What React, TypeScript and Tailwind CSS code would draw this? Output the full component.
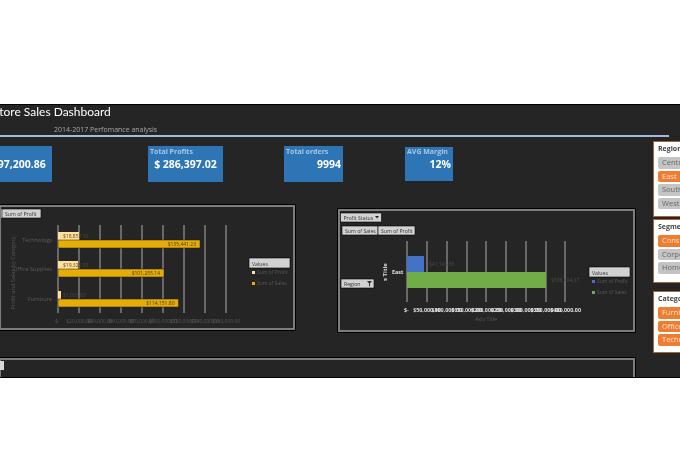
const FONT = 'font-["Open_Sans",sans-serif]';

interface BtnProps {
  x: number;
  y: number;
  w: number;
  h?: number;
  label: string;
}

// pivot chart field button; coordinates are page pixels (svg viewBox is offset)
function FieldBtn({ x, y, w, h = 9, label }: BtnProps) {
  return (
    <g>
      <rect x={x} y={y} width={w} height={h} fill="#d2d2d2" stroke="#000" strokeWidth="0.6" />
      <text x={x + 3} y={y + h - 2.5} fontSize="5.2" fill="#333">
        {label}
      </text>
    </g>
  );
}

function GridLines({ xs, y1, y2 }: { xs: number[]; y1: number; y2: number }) {
  return (
    <>
      {xs.map((x) => (
        <line key={x} x1={x} x2={x} y1={y1} y2={y2} stroke="#969696" strokeWidth="1.2" />
      ))}
    </>
  );
}

function ProfitChart() {
  const grid = [58, 79, 100, 121, 142, 163, 184, 205, 226];
  const rows = [
    { name: 'Technology', y: 232, profit: 21, sales: 142, pl: '$18,857.10', sl: '$135,441.23' },
    { name: 'Office Supplies', y: 261, profit: 20, sales: 106, pl: '$19,325.95', sl: '$101,255.14' },
    { name: 'Furniture', y: 291, profit: 3, sales: 120.5, pl: '$1,006.63', sl: '$114,151.80' },
  ];
  return (
    <div className="-ml-px h-[125px] w-[296px] shrink-0 border-2 border-[#7d7d7d] outline outline-black">
      <svg viewBox="1 207 292 121" className="block h-full w-full">
        <GridLines xs={grid} y1={225} y2={313} />
        <rect x="0" y="209" width="2" height="9" fill="#d2d2d2" />
        <FieldBtn x={2} y={209} w={39} label="Sum of Profit" />
        <text x="15" y="273" fontSize="5.6" fill="#555" textAnchor="middle" transform="rotate(-90 15 273)">
          Profit and Sales by Category
        </text>
        {rows.map((r) => (
          <g key={r.name}>
            <text x="52" y={r.y + 10} fontSize="5.6" fill="#5c5c5c" textAnchor="end">
              {r.name}
            </text>
            <rect x="58" y={r.y} width={r.profit} height="8" fill="#ffdf9e" />
            <rect x="58" y={r.y + 8} width={r.sales} height="8" fill="#e5ad06" stroke="#1a1a1a" strokeWidth="0.5" />
            <text x="63" y={r.y + 6} fontSize="5" fill={r.profit > 5 ? '#5a4a20' : '#4a4a4a'}>
              {r.pl}
            </text>
            <text x={58 + r.sales - 4} y={r.y + 14} fontSize="5" fill="#4d3a05" textAnchor="end">
              {r.sl}
            </text>
          </g>
        ))}
        <text x="55" y="323" fontSize="5" fill="#555">
          $-
        </text>
        {['$20,000.00', '$40,000.00', '$60,000.00', '$80,000.00', '$100,000.00', '$120,000.00', '$140,000.00', '$160,000.00'].map(
          (t, i) => (
            <text key={t} x={79 + i * 21} y="323" fontSize="5" fill="#585858" textAnchor="middle">
              {t}
            </text>
          ),
        )}
        <FieldBtn x={249} y={258} w={41} h={10} label="Values" />
        <rect x="252" y="271" width="3" height="3" fill="#ffdf9e" />
        <text x="257" y="274" fontSize="5" fill="#5a5a5a">
          Sum of Profit
        </text>
        <rect x="252" y="282" width="3" height="3" fill="#e5ad06" />
        <text x="257" y="285" fontSize="5" fill="#5a5a5a">
          Sum of Sales
        </text>
      </svg>
    </div>
  );
}

function RegionChart() {
  const grid = [407, 427, 447, 467, 486, 506, 526, 546, 565];
  const ticks = ['$50,000.00', '$100,000.00', '$150,000.00', '$200,000.00', '$250,000.00', '$300,000.00', '$350,000.00', '$400,000.00'];
  return (
    <div className="mt-1 ml-[43px] h-[123px] w-[297px] shrink-0 border-2 border-[#7d7d7d] outline outline-black">
      <svg viewBox="340 211 293 119" className="block h-full w-full">
        <GridLines xs={grid} y1={241} y2={302} />
        <FieldBtn x={340.5} y={213} w={41} label="Profit Status" />
        <path d="M375 216h4l-2 2.5z" fill="#222" />
        <FieldBtn x={342} y={226} w={36} label="Sum of Sales" />
        <FieldBtn x={378} y={226} w={37} label="Sum of Profit" />
        <FieldBtn x={341} y={279} w={33} label="Region" />
        <path d="M367 281h5l-2 2.5v3l-1-.6v-2.4z" fill="#333" />
        <text x="387" y="272" fontSize="6" fontWeight="700" fill="#d8d8d8" textAnchor="middle" transform="rotate(-90 387 272)">
          s Title
        </text>
        <text x="392" y="274" fontSize="5.4" fontWeight="700" fill="#e6e6e6">
          East
        </text>
        <rect x="407" y="256" width="17" height="16" fill="#4472c4" />
        <rect x="407" y="272" width="139" height="16" fill="#70ad47" />
        <text x="429" y="266" fontSize="5" fill="#4c4c4c">
          $41,104.56
        </text>
        <text x="551" y="282" fontSize="5" fill="#4c4c4c">
          $308,404.37
        </text>
        <text x="404" y="312" fontSize="5.4" fontWeight="700" fill="#e6e6e6">
          $-
        </text>
        {ticks.map((t, i) => (
          <text key={t} x={427 + i * 19.8} y="312" fontSize="5.4" fontWeight="700" fill="#e0e0e0" textAnchor="middle">
            {t}
          </text>
        ))}
        <text x="486" y="321" fontSize="5.4" fill="#575757" textAnchor="middle">
          Axis Title
        </text>
        <FieldBtn x={589} y={267} w={41} h={10} label="Values" />
        <rect x="592" y="280" width="3" height="3" fill="#4472c4" />
        <text x="597" y="283" fontSize="5" fill="#5a5a5a">
          Sum of Profit
        </text>
        <rect x="592" y="291" width="3" height="3" fill="#70ad47" />
        <text x="597" y="294" fontSize="5" fill="#5a5a5a">
          Sum of Sales
        </text>
      </svg>
    </div>
  );
}

function Slicer({ title, items, className }: { title: string; items: { label: string; on: boolean }[]; className: string }) {
  return (
    <div className={`w-[70px] border border-[#a5673a] bg-white pl-[4px] ${className}`}>
      <div className="h-[14px] pt-[2px] text-[7px] leading-[10px] font-bold text-[#444]">{title}</div>
      <div className="mt-[1px] flex flex-col gap-[2px]">
        {items.map((it) => (
          <div
            key={it.label}
            className={`h-[11.5px] rounded-[2px] pl-[4px] text-[7.5px] leading-[11.5px] whitespace-nowrap ${
              it.on ? 'bg-[#ed7d31] text-[#ffe3d0]' : 'bg-[#c4c4c4] text-[#666]'
            }`}
          >
            {it.label}
          </div>
        ))}
      </div>
    </div>
  );
}

export default function App() {
  return (
    <div className={`h-[459px] w-[680px] overflow-hidden bg-white pt-[104px] ${FONT}`}>
      <div className="h-[274px] overflow-hidden border-y border-black bg-[#252525] blur-[0.35px]">
        <div className='-ml-[7px] h-[17px] font-["Lato",sans-serif] text-[12px] leading-[13px] whitespace-nowrap text-white'>
          Store Sales Dashboard
        </div>
        <div className="ml-[54px] mt-[3px] h-[9px] text-[7px] leading-[9px] whitespace-nowrap text-[#a8a8a8]">
          2014-2017 Perfomance analysis
        </div>
        <div className="mt-[1px] h-[2px] w-[669px] bg-[#a3bcdc]" />
        <div className="flex">
          <div className="w-[653px] shrink-0">
            <div className="mt-[9px] flex h-[36px] items-start text-white">
              <div className="-ml-[23px] h-[36px] w-[75px] shrink-0 bg-[#2e75b6] pt-[11px] text-center text-[10.5px] leading-[14px] font-bold whitespace-nowrap">
                $ 297,200.86
              </div>
              <div className="ml-[96px] h-[36px] w-[75px] shrink-0 bg-[#2e75b6] px-[2px] pt-[1px]">
                <div className="text-[7px] leading-[10px] font-bold text-[#a9c6e4]">Total Profits</div>
                <div className="text-center text-[10.5px] leading-[14px] font-bold whitespace-nowrap">$ 286,397.02</div>
              </div>
              <div className="ml-[61px] h-[36px] w-[59px] shrink-0 bg-[#2e75b6] px-[2px] pt-[1px]">
                <div className="text-[7px] leading-[10px] font-bold text-[#a9c6e4]">Total orders</div>
                <div className="text-right text-[10.5px] leading-[14px] font-bold">9994</div>
              </div>
              <div className="ml-[62px] mt-[1px] h-[34px] w-[48px] shrink-0 bg-[#2e75b6] px-[2px]">
                <div className="text-[7px] leading-[10px] font-bold whitespace-nowrap text-[#a9c6e4]">AVG Margin</div>
                <div className="text-right text-[10.5px] leading-[14px] font-bold">12%</div>
              </div>
            </div>
            <div className="mt-[23px] flex items-start">
              <ProfitChart />
              <RegionChart />
            </div>
            <div className="-ml-px mt-[26px] h-[40px] w-[636px] border-2 border-[#7d7d7d] pt-[1px] outline outline-black">
              <div className="ml-[-1px] h-[9px] w-[4px] bg-[#d8d8d8]" />
            </div>
          </div>
          <div className="mt-[4px] flex shrink-0 flex-col">
            <Slicer
              title="Region"
              className="h-[76px]"
              items={[
                { label: 'Central', on: false },
                { label: 'East', on: true },
                { label: 'South', on: false },
                { label: 'West', on: false },
              ]}
            />
            <Slicer
              title="Segment"
              className="mt-[2px] h-[64px]"
              items={[
                { label: 'Consumer', on: true },
                { label: 'Corporate', on: false },
                { label: 'Home Office', on: false },
              ]}
            />
            <Slicer
              title="Category"
              className="mt-[8px] h-[62px]"
              items={[
                { label: 'Furniture', on: true },
                { label: 'Office Supplies', on: true },
                { label: 'Technology', on: true },
              ]}
            />
          </div>
        </div>
      </div>
    </div>
  );
}
